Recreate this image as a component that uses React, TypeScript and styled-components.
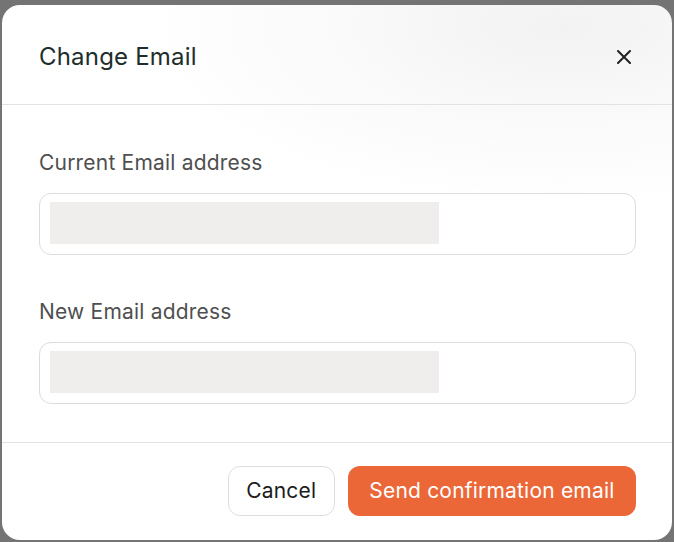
import React from "react";
import styled, { createGlobalStyle } from "styled-components";

const Global = createGlobalStyle`
  html, body { margin: 0; padding: 0; }
  body {
    background: #747474;
    font-family: Inter, "Noto Sans", sans-serif;
    -webkit-font-smoothing: antialiased;
  }
  * { box-sizing: border-box; }
`;

const Backdrop = styled.div`
  width: 674px;
  height: 542px;
  padding: 5px 2px 2px 2px;
  display: flex;
  flex-direction: column;
`;

const Modal = styled.div`
  flex: 1;
  background: radial-gradient(ellipse 420px 180px at 560px 20px, #f2f2f2 0%, #fafafa 55%, #ffffff 100%);
  border-radius: 18px;
  display: flex;
  flex-direction: column;
  overflow: hidden;
`;

const Header = styled.div`
  height: 100px;
  padding: 4px 36px 0 37px;
  display: flex;
  align-items: center;
  justify-content: space-between;
  border-bottom: 1.5px solid #e3e3e3;
`;

const Title = styled.h2`
  margin: 0;
  font-size: 24px;
  font-weight: 400;
  color: #1e2e2b;
  letter-spacing: 0.2px;
`;

const Close = styled.button`
  width: 24px;
  height: 24px;
  padding: 0;
  border: none;
  background: transparent;
  display: flex;
  align-items: center;
  justify-content: center;
  color: #222;
  cursor: pointer;
`;

const Body = styled.div`
  flex: 1;
  padding: 45px 36px 0 37px;
  display: flex;
  flex-direction: column;
  gap: 44px;
  border-bottom: 1.5px solid #e3e3e3;
`;

const Field = styled.div`
  display: flex;
  flex-direction: column;
  gap: 17px;
`;

const Label = styled.label`
  font-size: 21px;
  line-height: 26px;
  color: #4f4f4f;
  letter-spacing: 0.2px;
`;

const InputBox = styled.div`
  height: 62px;
  border: 1.5px solid #dcdcdc;
  border-radius: 12px;
  background: #fff;
  padding: 8px 10px;
  display: flex;
`;

const Skeleton = styled.div<{ $w: number }>`
  width: ${(p) => p.$w}px;
  height: 42px;
  background: #efeeec;
`;

const Footer = styled.div`
  height: 97px;
  padding: 0 36px 2px 37px;
  display: flex;
  align-items: center;
  justify-content: flex-end;
  gap: 13px;
`;

const Button = styled.button<{ $primary?: boolean }>`
  height: 50px;
  padding: 0 ${(p) => (p.$primary ? "21.5px" : "17.5px")};
  border-radius: 12px;
  font-family: Inter, "Noto Sans", sans-serif;
  font-size: 21px;
  letter-spacing: 0.2px;
  cursor: pointer;
  border: ${(p) => (p.$primary ? "none" : "1.5px solid #dedede")};
  background: ${(p) => (p.$primary ? "#ec6738" : "#fff")};
  color: ${(p) => (p.$primary ? "#fff" : "#1c1c1c")};
`;

export default function App() {
  return (
    <>
      <Global />
      <Backdrop>
        <Modal>
          <Header>
            <Title>Change Email</Title>
            <Close aria-label="Close">
              <svg width="14" height="14" viewBox="0 0 14 14">
                <path d="M1 1L13 13M13 1L1 13" stroke="#222" strokeWidth="2" strokeLinecap="round" />
              </svg>
            </Close>
          </Header>
          <Body>
            <Field>
              <Label>Current Email address</Label>
              <InputBox>
                <Skeleton $w={389} />
              </InputBox>
            </Field>
            <Field>
              <Label>New Email address</Label>
              <InputBox>
                <Skeleton $w={389} />
              </InputBox>
            </Field>
          </Body>
          <Footer>
            <Button>Cancel</Button>
            <Button $primary>Send confirmation email</Button>
          </Footer>
        </Modal>
      </Backdrop>
    </>
  );
}
